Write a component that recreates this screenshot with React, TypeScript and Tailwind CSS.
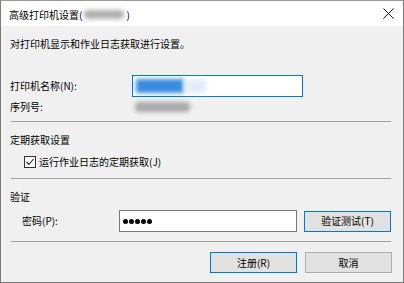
import { FC, ReactNode } from "react";

const font = "font-['Noto_Sans_CJK_SC','Noto_Sans',sans-serif]";

const Separator: FC<{ className?: string }> = ({ className }) => (
    <div className={`ml-[1px] w-[380px] h-px bg-[#a0a0a0] ${className ?? ''}`} />
);

const Button: FC<{ children: ReactNode; primary?: boolean }> = ({ children, primary }) => (
    <button
        type="button"
        className={`w-[87px] h-[21px] flex items-center justify-center text-[10px] leading-none text-black bg-[#e1e1e1] border ${primary ? 'border-[#0078d7]' : 'border-[#adadad]'}`}
    >
        {children}
    </button>
);

const App: FC = () => {
    return (
        <div className={`w-[404px] h-[283px] bg-[#f0f0f0] border border-[#7a7a7a] border-t-[#9a9a9a] flex flex-col text-black text-[10px] ${font}`}>
            {/* title bar */}
            <header className="h-[25px] bg-white flex items-center justify-between pl-[8px] pr-[8px]">
                <div className="flex items-center leading-[16px] mt-[2px]">
                    <span>高级打印机设置(</span>
                    <span className="w-[40px] h-[9px] mx-[2px] bg-[#b0b0b0] blur-[2px] rounded" />
                    <span>)</span>
                </div>
                <svg width="11" height="11" viewBox="0 0 11 11" className="mr-[1px]">
                    <path d="M0.5 0.5 L10.5 10.5 M10.5 0.5 L0.5 10.5" stroke="#1a1a1a" strokeWidth="1" fill="none" />
                </svg>
            </header>

            <section className="pl-[9px] pr-[11px] flex flex-col">
                <p className="mt-[10px] h-[16px] leading-[16px]">对打印机显示和作业日志获取进行设置。</p>

                <div className="mt-[23px] h-[22px] flex items-center">
                    <span className="w-[122px] leading-[16px]">打印机名称(N):</span>
                    <div className="w-[171px] h-[22px] bg-white border border-[#0078d7] flex items-center pl-[3px]">
                        <span className="w-[48px] h-[14px] bg-[#3a8ce0] blur-[2px]" />
                        <span className="w-[22px] h-[14px] bg-[#e4eef9] blur-[2px]" />
                    </div>
                </div>

                <div className="mt-[2px] h-[16px] flex items-center">
                    <span className="w-[125px] leading-[16px]">序列号:</span>
                    <span className="w-[55px] h-[10px] bg-[#aaaaaa] blur-[2px] rounded" />
                </div>

                <Separator className="mt-[6px] mb-[1px]" />

                <p className="mt-[9px] h-[16px] leading-[16px]">定期获取设置</p>

                <label className="mt-[6px] h-[16px] flex items-center ml-[14px] gap-[3px]">
                    <span className="w-[12px] h-[12px] border border-[#333] bg-white flex items-center justify-center">
                        <svg width="10" height="10" viewBox="0 0 10 10">
                            <path d="M1.5 5 L4 7.5 L8.5 2" stroke="#222" strokeWidth="1.1" fill="none" />
                        </svg>
                    </span>
                    <span className="leading-[16px]">运行作业日志的定期获取(J)</span>
                </label>

                <Separator className="mt-[8px] mb-[1px]" />

                <p className="mt-[9px] h-[16px] leading-[16px]">验证</p>

                <div className="mt-[5px] h-[22px] flex items-center">
                    <span className="ml-[12px] w-[97px] leading-[16px]">密码(P):</span>
                    <div className="w-[178px] h-[22px] bg-white border border-[#7a7a7a] flex items-center gap-[1px] pl-[3px]">
                        {[0, 1, 2, 3, 4].map(i => (
                            <span key={i} className="w-[5px] h-[5px] rounded-full bg-black" />
                        ))}
                    </div>
                    <div className="ml-[7px]">
                        <Button primary>验证测试(T)</Button>
                    </div>
                </div>

                <Separator className="mt-[9px] mb-[1px]" />

                <div className="mt-[9px] flex justify-end gap-[8px]">
                    <Button primary>注册(R)</Button>
                    <Button>取消</Button>
                </div>
            </section>
        </div>
    );
};

export default App;
